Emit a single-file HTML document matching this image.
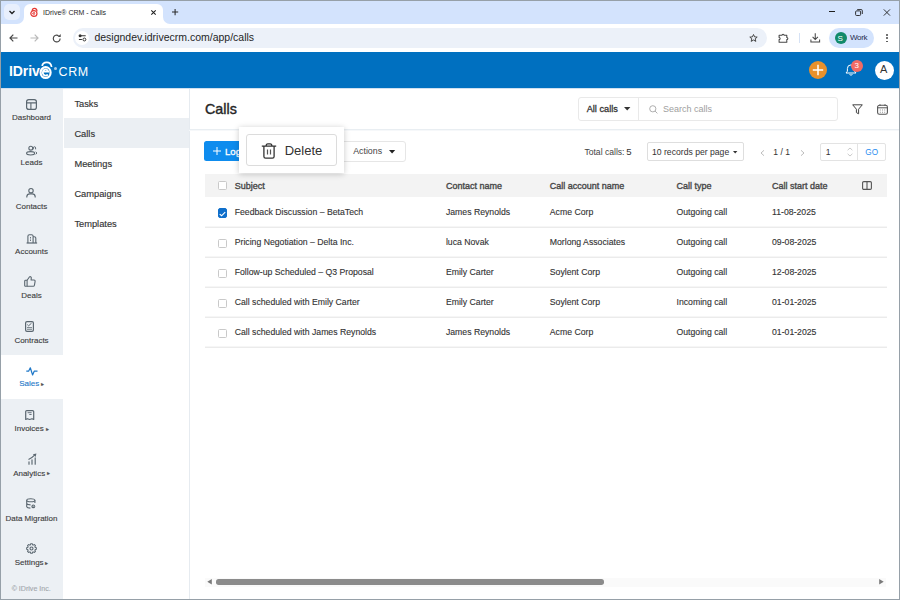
<!DOCTYPE html>
<html><head><meta charset="utf-8">
<style>
*{box-sizing:border-box;margin:0;padding:0}
html,body{width:900px;height:600px;overflow:hidden;background:#fff;font-family:"Liberation Sans",sans-serif;color:#333}
.a{position:absolute}
.t{position:absolute;line-height:1;white-space:nowrap}
svg{position:absolute;overflow:visible}
#frame{position:absolute;left:0;top:0;width:900px;height:600px;border:1px solid #96a0a8;pointer-events:none;z-index:50}
#tabstrip{left:0;top:0;width:900px;height:24px;background:#d3e3fd}
#tab{left:24px;top:4px;width:139px;height:20px;background:#fff;border-radius:6px 6px 0 0}
#toolbar{left:0;top:24px;width:900px;height:28px;background:#fff}
#omni{left:73px;top:28px;width:694px;height:20px;background:#ecf1f9;border-radius:10px}
#hdr{left:0;top:52px;width:900px;height:36px;background:#0070c0}
#nav{left:0;top:88px;width:63px;height:512px;background:#ecf0f4}
#sub{left:63px;top:88px;width:127px;height:512px;background:#fff;border-right:1px solid #e6ebf0}
.nl{position:absolute;left:0;width:63px;margin-top:0.6px;text-align:center;font-size:8px;line-height:1;color:#3d3d3d;white-space:nowrap;-webkit-text-stroke-width:0.12px}
.si{position:absolute;left:74.4px;margin-top:0.8px;font-size:9.3px;line-height:1;color:#333;-webkit-text-stroke-width:0.15px}
.col{font-size:9px;color:#474747;-webkit-text-stroke-width:0.35px;margin-top:0.6px}
.cell{font-size:8.7px;color:#333;margin-top:0.2px;-webkit-text-stroke-width:0.12px}
.cb{position:absolute;left:218px;width:9px;height:9px;border:1px solid #c9c9c9;border-radius:1.5px;background:#fff}
.sep{position:absolute;left:205px;width:682px;height:1px;background:#ebebeb;box-shadow:0 -1px 0 #f6f6f6}
</style></head><body>
<div id="frame"></div>

<!-- ===== browser chrome ===== -->
<div id="tabstrip" class="a"></div>
<div id="tab" class="a"></div>
<!-- tab bottom flares -->
<div class="a" style="left:17px;top:17px;width:7px;height:7px;background:#fff"></div>
<div class="a" style="left:10px;top:10px;width:14px;height:14px;border-radius:50%;background:#d3e3fd;box-shadow:none;clip-path:inset(7px 0 0 7px)"></div>
<div class="a" style="left:163px;top:17px;width:7px;height:7px;background:#fff"></div>
<div class="a" style="left:163px;top:10px;width:14px;height:14px;border-radius:50%;background:#d3e3fd;clip-path:inset(7px 7px 0 0)"></div>
<div class="a" style="left:4px;top:4px;width:16px;height:16px;border-radius:5px;background:#e8effc"></div>
<svg style="left:8px;top:8px" width="8" height="8" viewBox="0 0 8 8"><path d="M1.5 3 L4 5.5 L6.5 3" fill="none" stroke="#1f1f1f" stroke-width="1.3"/></svg>
<!-- favicon -->
<svg style="left:29.5px;top:7px" width="8" height="10" viewBox="0 0 8 10"><path d="M2.1 4.2 C2.2 0.4 7 0.3 7 4.4" fill="none" stroke="#e53935" stroke-width="1.15"/><ellipse cx="3.9" cy="6.5" rx="3.1" ry="2.9" fill="none" stroke="#e53935" stroke-width="1.2"/><path d="M2.7 6.3 H5 A1.15 1.2 0 1 0 4.7 7.4" fill="none" stroke="#e53935" stroke-width="0.8"/></svg>
<div class="t" style="left:43px;top:9.4px;font-size:7px;color:#1f1f1f">IDrive® CRM - Calls</div>
<svg style="left:151.1px;top:9.5px" width="5" height="5" viewBox="0 0 5 5"><path d="M0.3 0.3 L4.7 4.7 M4.7 0.3 L0.3 4.7" stroke="#1f1f1f" stroke-width="1.05"/></svg>
<svg style="left:172.1px;top:8.9px" width="6.2" height="6.2" viewBox="0 0 6.2 6.2"><path d="M3.1 0 V6.2 M0 3.1 H6.2" stroke="#2a2a2a" stroke-width="1.05"/></svg>
<!-- window controls -->
<div class="a" style="left:828.5px;top:11.2px;width:6.6px;height:0.9px;background:#1f1f1f"></div>
<svg style="left:855px;top:9px" width="8" height="7" viewBox="0 0 8 7"><rect x="0.6" y="1.9" width="5" height="4.6" rx="1" fill="none" stroke="#1f1f1f" stroke-width="0.9"/><path d="M2.2 0.6 H6.3 A1 1 0 0 1 7.3 1.6 V5" fill="none" stroke="#1f1f1f" stroke-width="0.9"/></svg>
<svg style="left:883px;top:9px" width="8" height="7" viewBox="0 0 8 7"><path d="M0.8 0.4 L7 6.6 M7 0.4 L0.8 6.6" stroke="#1f1f1f" stroke-width="0.9"/></svg>

<div id="toolbar" class="a"></div>
<!-- back/fwd/reload -->
<svg style="left:9px;top:34px" width="9" height="8" viewBox="0 0 9 8"><path d="M8.5 4 H1 M4.3 0.7 L1 4 L4.3 7.3" fill="none" stroke="#474747" stroke-width="1.2"/></svg>
<svg style="left:30.1px;top:34px" width="9" height="8" viewBox="0 0 9 8"><path d="M0.5 4 H8 M4.7 0.7 L8 4 L4.7 7.3" fill="none" stroke="#b9b9b9" stroke-width="1.2"/></svg>
<svg style="left:51.5px;top:33.5px" width="10" height="9" viewBox="0 0 10 9"><path d="M8.1 4.4 A3.4 3.4 0 1 1 6.6 1.7" fill="none" stroke="#474747" stroke-width="1.15"/><path d="M5.7 2.9 H8.7 V0 Z" fill="#474747"/></svg>
<div id="omni" class="a"></div>
<div class="a" style="left:75px;top:31px;width:14px;height:14px;border-radius:50%;background:#fff"></div>
<svg style="left:78px;top:33px" width="9" height="9" viewBox="0 0 9 9"><circle cx="2.1" cy="2.7" r="1.5" fill="#333"/><path d="M2 2.7 H7.7 M0.9 6.5 H3.9" stroke="#333" stroke-width="1.1"/><circle cx="6.4" cy="6.5" r="1.45" fill="none" stroke="#333" stroke-width="1"/></svg>
<div class="t" style="left:94.4px;top:32.1px;font-size:10.5px;color:#1f1f1f">designdev.idrivecrm.com/app/calls</div>
<svg style="left:749px;top:34px" width="9" height="8" viewBox="0 0 9 8"><path d="M4.5 0.5 L5.6 2.9 L8.2 3.1 L6.2 4.8 L6.8 7.4 L4.5 6 L2.2 7.4 L2.8 4.8 L0.8 3.1 L3.4 2.9 Z" fill="none" stroke="#474747" stroke-width="1"/></svg>
<svg style="left:778px;top:32.5px" width="11" height="10" viewBox="0 0 11 10"><path d="M1.1 2.3 H4 A1.05 1.05 0 0 1 6.1 2.3 H8.8 V4.5 A1.05 1.05 0 0 1 8.8 6.6 V9.2 H1.1 V6.6 A1.05 1.05 0 0 0 1.1 4.5 Z" fill="none" stroke="#474747" stroke-width="1.05" stroke-linejoin="round"/></svg>
<div class="a" style="left:798.8px;top:33px;width:1px;height:9.5px;background:#d6e2f5"></div>
<svg style="left:810px;top:33px" width="11" height="10" viewBox="0 0 11 10"><path d="M5.25 0.3 V6.3 M2.6 3.8 L5.25 6.5 L7.9 3.8 M0.9 6.6 V9 H9.6 V6.6" fill="none" stroke="#474747" stroke-width="1.05"/></svg>
<div class="a" style="left:829px;top:28px;width:45px;height:20px;border-radius:10px;background:#d3e3fd"></div>
<div class="a" style="left:835px;top:32px;width:12px;height:12px;border-radius:50%;background:#128a6a"></div>
<div class="t" style="left:837.5px;top:34.5px;font-size:8px;color:#fff">S</div>
<div class="t" style="left:850px;top:34px;font-size:8px;color:#1f2b4d;letter-spacing:-0.3px">Work</div>
<div class="a" style="left:886.3px;top:34px;width:1.9px;height:1.9px;background:#474747;border-radius:50%"></div>
<div class="a" style="left:886.3px;top:37.3px;width:1.9px;height:1.9px;background:#474747;border-radius:50%"></div>
<div class="a" style="left:886.3px;top:40.6px;width:1.9px;height:1.9px;background:#474747;border-radius:50%"></div>

<!-- ===== app header ===== -->
<div id="hdr" class="a"></div>
<div class="t" style="left:9px;top:63.6px;font-size:14px;font-weight:bold;color:#fff;letter-spacing:-0.1px">IDriv</div>
<svg style="left:36px;top:58px" width="24" height="24" viewBox="0 0 24 24"><path d="M6.2 8 C6.6 3.6 14.6 2.2 15.6 9" fill="none" stroke="#fff" stroke-width="1.7"/><ellipse cx="9.6" cy="14.6" rx="5" ry="5.4" fill="none" stroke="#fff" stroke-width="2.2"/><path d="M6.8 13.6 H12.2 A2.75 3.1 0 1 0 11.8 16.4" fill="none" stroke="#fff" stroke-width="1.8"/></svg>
<div class="a" style="left:54px;top:66.8px;width:3px;height:3px;border-radius:50%;background:#a9cbe9"></div>
<div class="t" style="left:58.5px;top:65.8px;font-size:12.5px;color:#fff;letter-spacing:0.6px">CRM</div>
<div class="a" style="left:808.5px;top:61px;width:18px;height:18px;border-radius:50%;background:#e8912c"></div>
<svg style="left:811.5px;top:64px" width="12" height="12" viewBox="0 0 12 12"><path d="M6 0.8 V11.2 M0.8 6 H11.2" stroke="#fff" stroke-width="1.5"/></svg>
<svg style="left:845px;top:63px" width="12" height="13" viewBox="0 0 12 13"><path d="M1 10 H11 L9.6 8.2 V5.5 A3.6 3.6 0 0 0 2.4 5.5 V8.2 Z M4.6 11.2 A1.5 1.5 0 0 0 7.4 11.2" fill="none" stroke="#fff" stroke-width="1"/></svg>
<div class="a" style="left:851px;top:60px;width:12px;height:12px;border-radius:50%;background:#f26b64"></div>
<div class="t" style="left:854.5px;top:61.8px;font-size:8px;color:#fff">3</div>
<div class="a" style="left:875px;top:60.5px;width:19px;height:19px;border-radius:50%;background:#fff"></div>
<div class="t" style="left:880px;top:64.3px;font-size:11px;color:#333">A</div>

<!-- ===== left nav ===== -->
<div class="a" style="left:0;top:88px;width:900px;height:1px;background:#cfe0f0;z-index:2"></div>
<div id="nav" class="a"></div>
<div class="a" style="left:1px;top:355px;width:62px;height:44px;background:#fff"></div>
<!-- dashboard -->
<svg style="left:26px;top:98.5px" width="11" height="11" viewBox="0 0 11 11"><rect x="0.6" y="0.6" width="9.8" height="9.8" rx="2.2" fill="none" stroke="#5b6770" stroke-width="1.2"/><path d="M0.6 3.9 H10.4 M4.9 3.9 V10.4" stroke="#5b6770" stroke-width="1.1"/></svg>
<div class="nl" style="top:113.6px">Dashboard</div>
<!-- leads -->
<svg style="left:25.5px;top:144.5px" width="12" height="11" viewBox="0 0 12 11"><circle cx="4.8" cy="3.2" r="1.95" fill="none" stroke="#5b6770" stroke-width="1.1"/><path d="M7.3 4.3 V2.9 A1.15 1.15 0 0 1 9.6 2.9 V4.3" fill="none" stroke="#5b6770" stroke-width="1"/><ellipse cx="4.6" cy="8.3" rx="4" ry="1.65" fill="none" stroke="#5b6770" stroke-width="1.15"/><path d="M9.7 6.9 L11 8.1 L9.7 9.3" fill="none" stroke="#5b6770" stroke-width="1"/></svg>
<div class="nl" style="top:158.2px">Leads</div>
<!-- contacts -->
<svg style="left:26px;top:188px" width="10" height="10" viewBox="0 0 10 10"><circle cx="5" cy="2.7" r="2.2" fill="none" stroke="#5b6770" stroke-width="1.1"/><path d="M0.8 9.6 V8.6 A3 3 0 0 1 3.8 5.9 H6.2 A3 3 0 0 1 9.2 8.6 V9.6" fill="none" stroke="#5b6770" stroke-width="1.1"/></svg>
<div class="nl" style="top:202.8px">Contacts</div>
<!-- accounts -->
<svg style="left:25.5px;top:233.5px" width="12" height="10" viewBox="0 0 12 10"><path d="M0.6 9 H11.1" stroke="#5b6770" stroke-width="1.2"/><path d="M1.9 9 V2.2 A1.5 1.5 0 0 1 3.4 0.7 H5.6 A1.5 1.5 0 0 1 7.1 2.2 V9 M7.1 2.7 H8.3 A1.5 1.5 0 0 1 9.8 4.2 V9" fill="none" stroke="#5b6770" stroke-width="1.1"/><path d="M4.5 3 V4.5 M4.5 5.5 V7" stroke="#5b6770" stroke-width="0.9"/></svg>
<div class="nl" style="top:247.2px">Accounts</div>
<!-- deals -->
<svg style="left:24.4px;top:275.9px" width="12" height="11" viewBox="0 0 12 11"><path d="M0.7 5.2 A0.9 0.9 0 0 1 1.6 4.3 H3.1 V10.3 H1.6 A0.9 0.9 0 0 1 0.7 9.4 Z" fill="none" stroke="#5b6770" stroke-width="1.1"/><path d="M3.1 4.3 L5.4 1 A1.1 1.1 0 0 1 7.3 1.6 L7.1 4 H10 A1.1 1.1 0 0 1 11.1 5.3 L10.4 9.4 A1.2 1.2 0 0 1 9.2 10.3 H3.1" fill="none" stroke="#5b6770" stroke-width="1.1" stroke-linejoin="round"/></svg>
<div class="nl" style="top:291.9px">Deals</div>
<!-- contracts -->
<svg style="left:25px;top:321px" width="9" height="11" viewBox="0 0 9 11"><rect x="0.6" y="0.6" width="7.8" height="9.8" rx="1.4" fill="none" stroke="#5b6770" stroke-width="1.2"/><path d="M2.3 3.6 L3.6 4.8 L6.5 2.2" fill="none" stroke="#5b6770" stroke-width="1"/><path d="M2 6.6 H7 M2 8.3 H7" stroke="#5b6770" stroke-width="0.8"/></svg>
<div class="nl" style="top:336.5px">Contracts</div>
<!-- sales (active) -->
<svg style="left:25.5px;top:366.5px" width="12" height="9" viewBox="0 0 12 9"><path d="M0.3 4.2 H2.6 L4.3 0.8 L6.6 8 L8.2 4.2 H11.5" fill="none" stroke="#1f78c8" stroke-width="1.2" stroke-linejoin="round"/></svg>
<div class="nl" style="top:379.9px;color:#1f78c8">Sales <span style="font-size:6px;position:relative;top:-0.5px;margin-left:-0.5px;color:#555">&#9656;</span></div>
<!-- invoices -->
<svg style="left:25.4px;top:409.8px" width="10" height="10" viewBox="0 0 10 10"><path d="M0.7 9.5 V1.7 A1.1 1.1 0 0 1 1.8 0.6 H7.6 A1.1 1.1 0 0 1 8.7 1.7 V9.5 L7 8.7 L4.7 9.5 L2.4 8.7 Z" fill="none" stroke="#5b6770" stroke-width="1.2" stroke-linejoin="round"/><path d="M2.6 2.7 H6.6 M4.3 4.5 H6.6" stroke="#5b6770" stroke-width="0.9"/></svg>
<div class="nl" style="top:424.9px">Invoices <span style="font-size:6px;position:relative;top:-0.5px;margin-left:-0.5px;color:#555">&#9656;</span></div>
<!-- analytics -->
<svg style="left:26.5px;top:452.5px" width="11" height="12" viewBox="0 0 11 12"><path d="M2 11.2 V8.9 M5 11.2 V6.9 M8.2 11.2 V4.9" stroke="#5b6770" stroke-width="1.15" stroke-linecap="round"/><path d="M1.5 6.5 Q5 5 7.6 2.2" fill="none" stroke="#5b6770" stroke-width="1.1"/><path d="M9.4 0.5 L5.9 1.3 L8.6 4 Z" fill="#5b6770"/></svg>
<div class="nl" style="top:469.2px">Analytics <span style="font-size:6px;position:relative;top:-0.5px;margin-left:-0.5px;color:#555">&#9656;</span></div>
<!-- data migration -->
<svg style="left:25.5px;top:498px" width="11" height="11" viewBox="0 0 11 11"><ellipse cx="4.8" cy="2.3" rx="4.1" ry="1.5" fill="none" stroke="#5b6770" stroke-width="1.1"/><path d="M0.7 2.3 V8.7 Q1.2 10 4.4 10.1 M8.9 2.3 V4.9 M0.7 5.6 Q1.4 6.9 4.6 6.9" fill="none" stroke="#5b6770" stroke-width="1.1"/><circle cx="7.3" cy="8.4" r="1.9" fill="#5b6770"/><path d="M6.4 8.3 H8.2 M7.6 7.6 L8.3 8.3" stroke="#eef1f4" stroke-width="0.6"/></svg>
<div class="nl" style="top:514.5px">Data Migration</div>
<!-- settings -->
<svg style="left:25.8px;top:542.8px" width="11" height="11" viewBox="0 0 11 11"><circle cx="5.5" cy="5.5" r="1.5" fill="none" stroke="#5b6770" stroke-width="1.1"/><path d="M4.73 0.66 L6.27 0.66 L6.67 1.89 L7.23 2.11 L8.38 1.54 L9.46 2.62 L8.89 3.77 L9.11 4.33 L10.34 4.73 L10.34 6.27 L9.11 6.67 L8.89 7.23 L9.46 8.38 L8.38 9.46 L7.23 8.89 L6.67 9.11 L6.27 10.34 L4.73 10.34 L4.33 9.11 L3.77 8.89 L2.62 9.46 L1.54 8.38 L2.11 7.23 L1.89 6.67 L0.66 6.27 L0.66 4.73 L1.89 4.33 L2.11 3.77 L1.54 2.62 L2.62 1.54 L3.77 2.11 L4.33 1.89 Z" fill="none" stroke="#5b6770" stroke-width="1.05" stroke-linejoin="round"/></svg>
<div class="nl" style="top:558.5px">Settings <span style="font-size:6px;position:relative;top:-0.5px;margin-left:-0.5px;color:#555">&#9656;</span></div>
<div class="nl" style="top:585.6px;color:#a3a8ad;font-size:7.1px;left:-0.3px">© IDrive Inc.</div>

<div class="a" style="left:63px;top:88px;width:1px;height:512px;background:#dce5ed"></div>
<!-- ===== sub nav ===== -->
<div id="sub" class="a"></div>
<div class="a" style="left:64px;top:118px;width:125px;height:30px;background:#ebeff3"></div>
<div class="si" style="top:99.1px">Tasks</div>
<div class="si" style="top:129.1px">Calls</div>
<div class="si" style="top:159.1px">Meetings</div>
<div class="si" style="top:189.1px">Campaigns</div>
<div class="si" style="top:219.1px">Templates</div>

<!-- ===== main ===== -->
<div class="a" style="left:189px;top:128.5px;width:710px;height:1px;background:#e9eef2;box-shadow:0 1px 0 #f6f8fa"></div>
<div class="t" style="left:205px;top:102.4px;font-size:14.3px;color:#262626;-webkit-text-stroke-width:0.4px">Calls</div>
<div class="a" style="left:577.5px;top:96.5px;width:260.5px;height:24px;border:1px solid #e9e9e9;border-radius:3px"></div>
<div class="a" style="left:638px;top:97px;width:1px;height:23px;background:#e9e9e9"></div>
<div class="t" style="left:586.7px;top:104.9px;font-size:9.2px;color:#333;-webkit-text-stroke-width:0.3px">All calls</div>
<svg style="left:623.5px;top:107.3px" width="7" height="4" viewBox="0 0 7 4"><path d="M0 0 H6.4 L3.2 3.6 Z" fill="#333"/></svg>
<svg style="left:648.5px;top:104.5px" width="9" height="9" viewBox="0 0 9 9"><circle cx="3.8" cy="3.8" r="3.1" fill="none" stroke="#a5a5a5" stroke-width="0.9"/><path d="M6.1 6.1 L8.4 8.4" stroke="#a5a5a5" stroke-width="0.9"/></svg>
<div class="t" style="left:663px;top:104.9px;font-size:9px;color:#a0a0a0">Search calls</div>
<svg style="left:851.5px;top:103.5px" width="11" height="11" viewBox="0 0 11 11"><path d="M0.7 0.8 H10.3 L6.6 5.2 V9.8 L4.4 8.6 V5.2 Z" fill="none" stroke="#444" stroke-width="1" stroke-linejoin="round"/></svg>
<svg style="left:876.5px;top:103.5px" width="11" height="11" viewBox="0 0 11 11"><rect x="0.6" y="1.3" width="9.8" height="9" rx="1.8" fill="none" stroke="#555" stroke-width="1.1"/><path d="M0.6 3.8 H10.4 M3 0.3 V2 M8 0.3 V2" stroke="#555" stroke-width="1"/><path d="M3.3 5.6 V6.4 M5.5 5.6 V6.4 M7.7 5.6 V6.4 M3.3 7.8 V8.6 M5.5 7.8 V8.6 M7.7 7.8 V8.6" stroke="#777" stroke-width="1"/></svg>

<div class="a" style="left:204.3px;top:140.7px;width:60px;height:20.8px;background:#0e8cee;border-radius:2.5px"></div>
<svg style="left:213px;top:147.3px" width="8" height="8" viewBox="0 0 8 8"><path d="M4 0 V8 M0 4 H8" stroke="#fff" stroke-width="1"/></svg>
<div class="t" style="left:225px;top:146.5px;font-size:9.6px;color:#fff;-webkit-text-stroke-width:0.3px">Log call</div>
<div class="a" style="left:330px;top:140.5px;width:75.5px;height:21.5px;border:1px solid #e6e6e6;border-radius:3px;background:#fff"></div>
<div class="t" style="left:353.2px;top:147.1px;font-size:8.8px;color:#444">Actions</div>
<svg style="left:388.8px;top:149.8px" width="7" height="4" viewBox="0 0 7 4"><path d="M0 0 H6.2 L3.1 3.4 Z" fill="#222"/></svg>

<div class="t" style="left:584.4px;top:148.1px;font-size:8.6px;color:#444">Total calls:</div>
<div class="t" style="left:626.2px;top:147.3px;font-size:9.6px;color:#333">5</div>
<div class="a" style="left:647px;top:142.4px;width:97.4px;height:18.4px;border:1px solid #dedede;border-radius:2px"></div>
<div class="t" style="left:652px;top:148.1px;font-size:8.65px;color:#333">10 records per page</div>
<svg style="left:733.3px;top:150.8px" width="5" height="3" viewBox="0 0 5 3"><path d="M0 0 H4.4 L2.2 2.6 Z" fill="#333"/></svg>
<svg style="left:760px;top:149.5px" width="5" height="6" viewBox="0 0 5 6"><path d="M4 0.3 L1 3 L4 5.7" fill="none" stroke="#b5b5b5" stroke-width="0.9"/></svg>
<div class="t" style="left:773.3px;top:148.3px;font-size:8.6px;color:#333">1 / 1</div>
<svg style="left:799.5px;top:149.5px" width="5" height="6" viewBox="0 0 5 6"><path d="M1 0.3 L4 3 L1 5.7" fill="none" stroke="#b5b5b5" stroke-width="0.9"/></svg>
<div class="a" style="left:819.5px;top:142.5px;width:66.5px;height:18.2px;border:1px solid #e3e3e3;border-radius:2px"></div>
<div class="a" style="left:857.3px;top:143px;width:1px;height:17.2px;background:#e3e3e3"></div>
<div class="t" style="left:825.8px;top:148.3px;font-size:8.6px;color:#333">1</div>
<svg style="left:847px;top:147px" width="6" height="10" viewBox="0 0 6 10"><path d="M0.6 3.2 L3 1 L5.4 3.2 M0.6 6.8 L3 9 L5.4 6.8" fill="none" stroke="#c4c4c4" stroke-width="0.9"/></svg>
<div class="t" style="left:865.3px;top:148.6px;font-size:8.2px;color:#2a8ef0">GO</div>

<!-- table -->
<div class="a" style="left:205px;top:174px;width:681.7px;height:23px;background:#f3f3f3"></div>
<div class="cb" style="top:180.5px;height:9.3px"></div>
<div class="t col" style="left:234.7px;top:181.1px">Subject</div>
<div class="t col" style="left:445.9px;top:181.1px">Contact name</div>
<div class="t col" style="left:549.8px;top:181.1px">Call account name</div>
<div class="t col" style="left:676.5px;top:181.1px">Call type</div>
<div class="t col" style="left:772px;top:181.1px">Call start date</div>
<svg style="left:861.5px;top:181.2px" width="10" height="9" viewBox="0 0 10 9"><rect x="0.6" y="0.6" width="8.8" height="7.8" rx="1.2" fill="none" stroke="#555" stroke-width="1.1"/><path d="M5 0.6 V8.4" stroke="#555" stroke-width="1.1"/></svg>
<div class="cb" style="left:217.5px;top:208.2px;width:9.8px;height:9.8px;background:#0f6fcb;border-color:#0f6fcb;border-radius:2px"></div>
<svg style="left:219px;top:210.8px" width="7" height="6" viewBox="0 0 7 6"><path d="M0.7 3.1 L2.6 4.8 L6.2 1.2" fill="none" stroke="#fff" stroke-width="1.15"/></svg>
<div class="t cell" style="left:234.7px;top:207.58px">Feedback Discussion – BetaTech</div>
<div class="t cell" style="left:445.9px;top:207.58px">James Reynolds</div>
<div class="t cell" style="left:549.8px;top:207.58px">Acme Corp</div>
<div class="t cell" style="left:676.5px;top:207.58px">Outgoing call</div>
<div class="t cell" style="left:772px;top:207.58px">11-08-2025</div>
<div class="sep" style="top:227px"></div>
<div class="cb" style="top:238.5px"></div>
<div class="t cell" style="left:234.7px;top:237.58px">Pricing Negotiation – Delta Inc.</div>
<div class="t cell" style="left:445.9px;top:237.58px">luca Novak</div>
<div class="t cell" style="left:549.8px;top:237.58px">Morlong Associates</div>
<div class="t cell" style="left:676.5px;top:237.58px">Outgoing call</div>
<div class="t cell" style="left:772px;top:237.58px">09-08-2025</div>
<div class="sep" style="top:257px"></div>
<div class="cb" style="top:268.5px"></div>
<div class="t cell" style="left:234.7px;top:267.58px">Follow-up Scheduled – Q3 Proposal</div>
<div class="t cell" style="left:445.9px;top:267.58px">Emily Carter</div>
<div class="t cell" style="left:549.8px;top:267.58px">Soylent Corp</div>
<div class="t cell" style="left:676.5px;top:267.58px">Outgoing call</div>
<div class="t cell" style="left:772px;top:267.58px">12-08-2025</div>
<div class="sep" style="top:287px"></div>
<div class="cb" style="top:298.5px"></div>
<div class="t cell" style="left:234.7px;top:297.58px">Call scheduled with Emily Carter</div>
<div class="t cell" style="left:445.9px;top:297.58px">Emily Carter</div>
<div class="t cell" style="left:549.8px;top:297.58px">Soylent Corp</div>
<div class="t cell" style="left:676.5px;top:297.58px">Incoming call</div>
<div class="t cell" style="left:772px;top:297.58px">01-01-2025</div>
<div class="sep" style="top:317px"></div>
<div class="cb" style="top:328.5px"></div>
<div class="t cell" style="left:234.7px;top:327.58px">Call scheduled with James Reynolds</div>
<div class="t cell" style="left:445.9px;top:327.58px">James Reynolds</div>
<div class="t cell" style="left:549.8px;top:327.58px">Acme Corp</div>
<div class="t cell" style="left:676.5px;top:327.58px">Outgoing call</div>
<div class="t cell" style="left:772px;top:327.58px">01-01-2025</div>
<div class="sep" style="top:347px"></div>

<!-- scrollbar -->
<div class="a" style="left:204.5px;top:577.7px;width:681.5px;height:9px;background:#fafafa"></div>
<svg style="left:207px;top:579.3px" width="5" height="6" viewBox="0 0 5 6"><path d="M4.8 0 V5.4 L0.3 2.7 Z" fill="#7a7a7a"/></svg>
<div class="a" style="left:215.7px;top:579.3px;width:388.5px;height:5.4px;border-radius:2.7px;background:#8b8b8b"></div>
<svg style="left:878.5px;top:579.3px" width="5" height="6" viewBox="0 0 5 6"><path d="M0.2 0 V5.4 L4.7 2.7 Z" fill="#7a7a7a"/></svg>

<!-- delete popup -->
<div class="a" style="left:239px;top:127px;width:105px;height:46px;background:#fff;box-shadow:0 1px 6px rgba(0,0,0,0.22)"></div>
<div class="a" style="left:246.3px;top:134px;width:90.5px;height:31.6px;border:1px solid #dcdcdc;border-radius:3px;background:#fff"></div>
<svg style="left:260.5px;top:142.5px" width="16" height="16" viewBox="0 0 16 16"><path d="M0.8 3.2 H15.2 M5.2 3.2 V2.2 A1.6 1.6 0 0 1 6.8 0.8 H9.2 A1.6 1.6 0 0 1 10.8 2.2 V3.2 M2.9 3.2 V13.5 A1.7 1.7 0 0 0 4.6 15.2 H11.4 A1.7 1.7 0 0 0 13.1 13.5 V3.2" fill="none" stroke="#333" stroke-width="1.3"/><path d="M6.5 6.6 V11.6 M9.5 6.6 V11.6" stroke="#555" stroke-width="1.2"/></svg>
<div class="t" style="left:284.7px;top:144.3px;font-size:13px;color:#333">Delete</div>
</body></html>
